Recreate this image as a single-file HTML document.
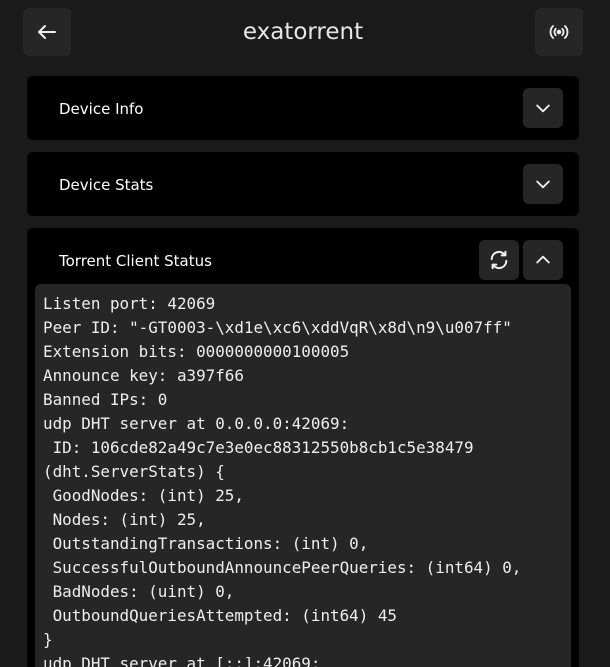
<!DOCTYPE html><html><head><style>
html,body{margin:0;width:610px;height:667px;overflow:hidden}
body{background:#1a1a1a;font-family:"DejaVu Sans","Liberation Sans",sans-serif;color:#eee;position:relative}
.b{position:absolute;background:#262626;border-radius:6px;display:flex;align-items:center;justify-content:center}
.card{position:absolute;left:27px;width:552px;background:#000;border-radius:6px}
.t{position:absolute;left:32px;font-size:15px;color:#fff}
pre{position:absolute;left:35px;top:284px;width:536px;height:383px;margin:0;background:#262626;border-radius:6px 6px 0 0;padding:8px 8px 0;box-sizing:border-box;font-family:"DejaVu Sans Mono","Liberation Mono",monospace;font-size:15.9px;line-height:24px;color:#eee;overflow:hidden}
</style></head><body>
<div class="b" style="left:23px;top:8px;width:48px;height:48px"><svg width="24" height="24" viewBox="0 0 24 24" fill="none" stroke="#eee" stroke-width="2" stroke-linecap="round" stroke-linejoin="round"><path d="M20 12H4M10 6l-6 6 6 6"/></svg></div>
<div style="position:absolute;left:0;width:606px;top:19px;text-align:center;font-size:23px;color:#e6e6e6">exatorrent</div>
<div class="b" style="left:535px;top:8px;width:48px;height:48px"><svg width="22" height="22" viewBox="0 0 24 24" fill="none" stroke="#eee" stroke-width="2" stroke-linecap="round"><circle cx="12" cy="12" r="1.5" fill="#eee"/><path d="M8.5 8.5a5 5 0 0 0 0 7M15.5 8.5a5 5 0 0 1 0 7M5.5 5.5a9 9 0 0 0 0 13M18.5 5.5a9 9 0 0 1 0 13"/></svg></div>
<div class="card" style="top:76px;height:64px"><div class="t" style="top:24px">Device Info</div><div class="b" style="left:496px;top:12px;width:40px;height:40px"><svg width="20" height="20" viewBox="0 0 24 24" fill="none" stroke="#eee" stroke-width="2.2" stroke-linecap="round" stroke-linejoin="round"><path d="M5 9l7 7 7-7"/></svg></div></div>
<div class="card" style="top:152px;height:64px"><div class="t" style="top:24px">Device Stats</div><div class="b" style="left:496px;top:12px;width:40px;height:40px"><svg width="20" height="20" viewBox="0 0 24 24" fill="none" stroke="#eee" stroke-width="2.2" stroke-linecap="round" stroke-linejoin="round"><path d="M5 9l7 7 7-7"/></svg></div></div>
<div class="card" style="top:228px;height:439px;border-radius:6px 6px 0 0"><div class="t" style="top:24px">Torrent Client Status</div>
<div class="b" style="left:452px;top:12px;width:40px;height:40px"><svg width="22" height="22" viewBox="0 0 24 24" fill="none" stroke="#eee" stroke-width="2.2" stroke-linecap="round" stroke-linejoin="round"><path d="M4 11a8 8 0 0 1 14.5-4.5M20 13a8 8 0 0 1-14.5 4.5M19 3v4h-4M5 21v-4h4"/></svg></div>
<div class="b" style="left:496px;top:12px;width:40px;height:40px"><svg width="20" height="20" viewBox="0 0 24 24" fill="none" stroke="#eee" stroke-width="2.2" stroke-linecap="round" stroke-linejoin="round"><path d="M5 15l7-7 7 7"/></svg></div></div>
<pre>Listen port: 42069
Peer ID: "-GT0003-\xd1e\xc6\xddVqR\x8d\n9\u007ff"
Extension bits: 0000000000100005
Announce key: a397f66
Banned IPs: 0
udp DHT server at 0.0.0.0:42069:
 ID: 106cde82a49c7e3e0ec88312550b8cb1c5e38479
(dht.ServerStats) {
 GoodNodes: (int) 25,
 Nodes: (int) 25,
 OutstandingTransactions: (int) 0,
 SuccessfulOutboundAnnouncePeerQueries: (int64) 0,
 BadNodes: (uint) 0,
 OutboundQueriesAttempted: (int64) 45
}
udp DHT server at [::]:42069:</pre>
</body></html>
